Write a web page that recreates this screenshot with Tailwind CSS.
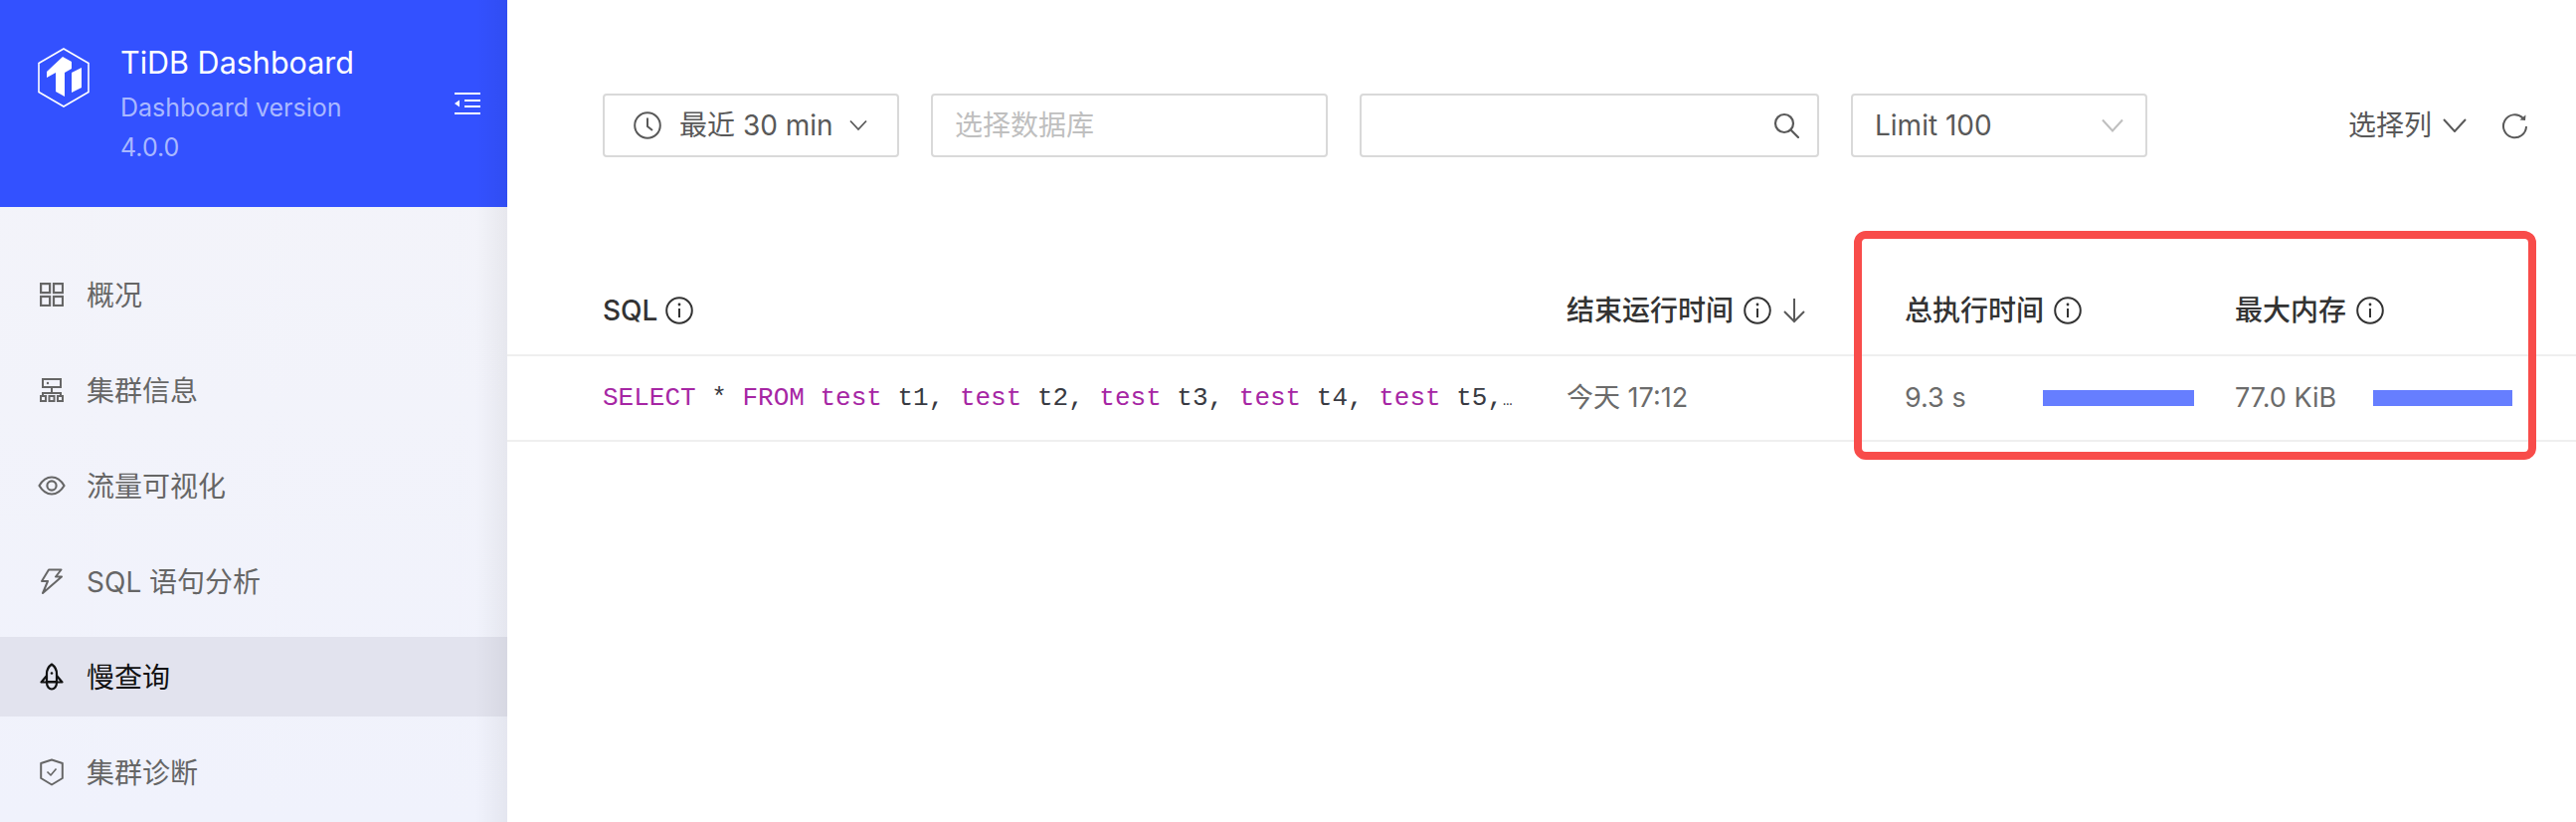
<!DOCTYPE html>
<html lang="zh-CN">
<head>
  <meta charset="UTF-8" />
  <title>TiDB Dashboard - 慢查询</title>
  <script src="https://cdn.jsdelivr.net/npm/@tailwindcss/browser@4"></script>
</head>
<body class="bg-white text-[#595959] font-['Inter','Noto_Sans_CJK_SC',sans-serif]">
<div class="relative flex h-[826px] w-[2590px] overflow-hidden">

  <!-- Sidebar -->
  <aside class="relative w-[510px] shrink-0 bg-gradient-to-b from-[#f4f4f9] to-[#f0f2fc]">
    <div class="relative flex h-[208px] bg-[#3351ff] pl-[38px] pt-[48px]">
      <svg class="w-[52px] h-[60px] shrink-0" viewBox="0 0 52 60">
        <path d="M26 1 L51 15.5 V44.5 L26 59 L1 44.5 V15.5 Z" fill="none" stroke="#fff" stroke-width="1.6"/>
        <path d="M9 24 L25 9 L34 14 V21 L27 25 V49 L18 44 V25 L9 30 Z" fill="#fff"/>
        <path d="M34 25 L44 20 V40 L34 45 Z" fill="#fff"/>
      </svg>
      <div class="ml-[31px] -mt-[6px]">
        <div class="text-[30.5px] leading-[42px] text-white">TiDB Dashboard</div>
        <div class="text-[25px] leading-[40px] mt-[4px] text-[#a9b8ff]">Dashboard version</div>
        <div class="text-[25px] leading-[40px] text-[#a9b8ff]">4.0.0</div>
      </div>
      <svg class="absolute left-[457px] top-[93px] w-[26px] h-[22px]" viewBox="0 0 26 22" fill="#fff">
        <rect x="0" y="0" width="26" height="2"/>
        <rect x="10" y="7" width="16" height="2"/>
        <rect x="10" y="13" width="16" height="2"/>
        <rect x="0" y="20" width="26" height="2"/>
        <path d="M0 11 L5 7.5 V14.5 Z"/>
      </svg>
    </div>

    <nav class="flex flex-col gap-4 pt-[48px] text-[28px] text-[#666] [&>div>span]:pt-[2px]">
      <div class="flex h-[80px] items-center pl-[40px] gap-[23px]">
        <svg class="w-[24px] h-[24px]" viewBox="0 0 24 24" fill="none" stroke="currentColor" stroke-width="2.2">
          <rect x="1.1" y="1.1" width="9" height="9"/><rect x="14" y="1.1" width="9" height="9"/>
          <rect x="1.1" y="14" width="9" height="9"/><rect x="14" y="14" width="9" height="9"/>
        </svg>
        <span>概况</span>
      </div>
      <div class="flex h-[80px] items-center pl-[40px] gap-[23px]">
        <svg class="w-[24px] h-[24px]" viewBox="0 0 24 24" fill="none" stroke="currentColor" stroke-width="2">
          <rect x="3" y="1" width="18" height="8"/>
          <path d="M12 9 V15 M3 18 V15 H21 V18"/>
          <rect x="1" y="18" width="5" height="5"/><rect x="9.5" y="18" width="5" height="5"/><rect x="18" y="18" width="5" height="5"/>
          <circle cx="8" cy="5" r="1.2" fill="currentColor" stroke="none"/>
        </svg>
        <span>集群信息</span>
      </div>
      <div class="flex h-[80px] items-center pl-[38px] gap-[21px]">
        <svg class="w-[28px] h-[24px]" viewBox="0 0 28 24" fill="none" stroke="currentColor" stroke-width="2.1">
          <path d="M1.5 12 C5 6 9 3.5 14 3.5 S23 6 26.5 12 C23 18 19 20.5 14 20.5 S5 18 1.5 12 Z"/>
          <circle cx="14" cy="12" r="4.6"/>
        </svg>
        <span>流量可视化</span>
      </div>
      <div class="flex h-[80px] items-center pl-[40px] gap-[23px]">
        <svg class="w-[24px] h-[26px]" viewBox="0 0 24 26" fill="none" stroke="currentColor" stroke-width="2" stroke-linejoin="round">
          <path d="M9 1.5 H21.5 L16 8.5 H22 L3 25 L8 13 H2 Z"/>
        </svg>
        <span>SQL 语句分析</span>
      </div>
      <div class="flex h-[80px] items-center pl-[40px] gap-[23px] bg-[#e2e3ee] text-[#111]">
        <svg class="w-[24px] h-[28px]" viewBox="0 0 24 28" fill="none" stroke="currentColor" stroke-width="2.2" stroke-linejoin="round">
          <path d="M12 1.5 C15.5 4 17 7 17 11 V19 H7 V11 C7 7 8.5 4 12 1.5 Z"/>
          <path d="M7 13 L1.5 19.5 H22.5 L17 13"/>
          <path d="M7 20 C7 24 9.5 26.5 12 26.5 S17 24 17 20"/>
          <circle cx="12" cy="10.5" r="1.3" fill="currentColor" stroke="none"/>
        </svg>
        <span>慢查询</span>
      </div>
      <div class="flex h-[80px] items-center pl-[40px] gap-[23px]">
        <svg class="w-[24px] h-[28px]" viewBox="0 0 24 28" fill="none" stroke="currentColor" stroke-width="2" stroke-linejoin="round">
          <path d="M12 1.5 L22.8 5 V20 L12 26.5 L1.2 20 V5 Z"/>
          <path d="M7.5 13.5 L11 17 L16.5 10.5" stroke-width="1.6"/>
        </svg>
        <span>集群诊断</span>
      </div>
    </nav>

    <!-- soft right edge of the sidebar -->
    <div class="absolute right-0 top-0 h-full w-[32px] bg-gradient-to-r from-transparent to-black/5"></div>
  </aside>

  <!-- Main -->
  <main class="flex-1 min-w-0">
    <div class="flex items-start gap-[32px] pl-[96px] pt-[94px] text-[28px]">
      <div class="flex h-[64px] w-[298px] items-center rounded border-2 border-[#d9d9d9] pl-[29px]">
        <svg class="w-[28px] h-[28px] shrink-0" viewBox="0 0 28 28" fill="none" stroke="currentColor" stroke-width="2">
          <circle cx="14" cy="14" r="12.8"/><path d="M14 6.5 V15 L19 19"/>
        </svg>
        <span class="ml-[18px] whitespace-nowrap">最近 30 min</span>
        <svg class="ml-[16px] w-[18px] h-[12px] shrink-0" viewBox="0 0 18 12" fill="none" stroke="currentColor" stroke-width="1.8"><path d="M1 1.5 L9 10 L17 1.5"/></svg>
      </div>
      <div class="flex h-[64px] w-[399px] items-center rounded border-2 border-[#d9d9d9] pl-[22px] text-[#bfbfbf]">选择数据库</div>
      <div class="flex h-[64px] w-[462px] items-center justify-end rounded border-2 border-[#d9d9d9] pr-[18px]">
        <svg class="w-[26px] h-[26px]" viewBox="0 0 26 26" fill="none" stroke="currentColor" stroke-width="2.2">
          <circle cx="11" cy="11" r="9"/><path d="M17.5 17.5 L25 25" stroke-linecap="round"/>
        </svg>
      </div>
      <div class="flex h-[64px] w-[298px] items-center justify-between rounded border-2 border-[#d9d9d9] pl-[22px] pr-[22px]">
        <span>Limit 100</span>
        <svg class="w-[22px] h-[14px]" viewBox="0 0 22 14" fill="none" stroke="#bfbfbf" stroke-width="2"><path d="M1 1.5 L11 12.5 L21 1.5"/></svg>
      </div>
      <div class="ml-[170px] flex h-[64px] items-center">
        <span class="whitespace-nowrap">选择列</span>
        <svg class="ml-[11px] w-[24px] h-[14px] shrink-0" viewBox="0 0 24 14" fill="none" stroke="currentColor" stroke-width="2"><path d="M1 1 L12 13 L23 1"/></svg>
        <svg class="ml-[35px] mt-[2px] w-[28px] h-[28px] shrink-0" viewBox="0 0 28 28" fill="none" stroke="currentColor" stroke-width="2">
          <path d="M25 14 A11.5 11.5 0 1 1 21.5 5.5"/>
          <path d="M24.5 2.5 L24 8 L18.5 7.5 Z" fill="currentColor" stroke="none"/>
        </svg>
      </div>
    </div>

    <!-- Table -->
    <div class="mt-[110px]">
      <div class="grid h-[90px] grid-cols-[969px_340px_332px_343px] items-center border-b-2 border-[#efefef] pl-[96px] text-[28px] font-medium text-[#333]">
        <div class="flex items-center">SQL
          <svg class="ml-[8px] w-[28px] h-[28px]" viewBox="0 0 28 28" fill="none" stroke="currentColor" stroke-width="2"><circle cx="14" cy="14" r="12.8"/><path d="M14 12 V21"/><circle cx="14" cy="8" r="1.4" fill="currentColor" stroke="none"/></svg>
        </div>
        <div class="flex items-center">结束运行时间
          <svg class="ml-[10px] w-[28px] h-[28px]" viewBox="0 0 28 28" fill="none" stroke="currentColor" stroke-width="2"><circle cx="14" cy="14" r="12.8"/><path d="M14 12 V21"/><circle cx="14" cy="8" r="1.4" fill="currentColor" stroke="none"/></svg>
          <svg class="ml-[11px] w-[24px] h-[26px]" viewBox="0 0 24 26" fill="none" stroke="#595959" stroke-width="2"><path d="M12 1 V24 M2 14 L12 24 L22 14"/></svg>
        </div>
        <div class="flex items-center">总执行时间
          <svg class="ml-[10px] w-[28px] h-[28px]" viewBox="0 0 28 28" fill="none" stroke="currentColor" stroke-width="2"><circle cx="14" cy="14" r="12.8"/><path d="M14 12 V21"/><circle cx="14" cy="8" r="1.4" fill="currentColor" stroke="none"/></svg>
        </div>
        <div class="flex items-center">最大内存
          <svg class="ml-[10px] w-[28px] h-[28px]" viewBox="0 0 28 28" fill="none" stroke="currentColor" stroke-width="2"><circle cx="14" cy="14" r="12.8"/><path d="M14 12 V21"/><circle cx="14" cy="8" r="1.4" fill="currentColor" stroke="none"/></svg>
        </div>
      </div>
      <div class="grid h-[86px] grid-cols-[969px_340px_332px_343px] items-center border-b-2 border-[#efefef] pl-[96px] text-[27px] text-[#6b6b6b]">
        <div class="font-['Liberation_Mono',monospace] text-[26px] text-[#383a42]"><span class="text-[#a626a4]">SELECT</span> * <span class="text-[#a626a4]">FROM</span> <span class="text-[#a626a4]">test</span> t1, <span class="text-[#a626a4]">test</span> t2, <span class="text-[#a626a4]">test</span> t3, <span class="text-[#a626a4]">test</span> t4, <span class="text-[#a626a4]">test</span> t5,<span class="text-[16px]">…</span></div>
        <div>今天 17:12</div>
        <div class="flex items-center">
          <span class="w-[139px]">9.3 s</span>
          <div class="h-[16px] w-[152px] bg-[#667eff]"></div>
        </div>
        <div class="flex items-center">
          <span class="w-[139px] whitespace-nowrap">77.0 KiB</span>
          <div class="h-[16px] w-[140px] bg-[#667eff]"></div>
        </div>
      </div>
    </div>
  </main>

  <!-- Annotation drawn over the screenshot -->
  <div class="absolute left-[1864px] top-[232px] h-[230px] w-[686px] rounded-[12px] border-[8px] border-[#f84c4a]"></div>
</div>
</body>
</html>
